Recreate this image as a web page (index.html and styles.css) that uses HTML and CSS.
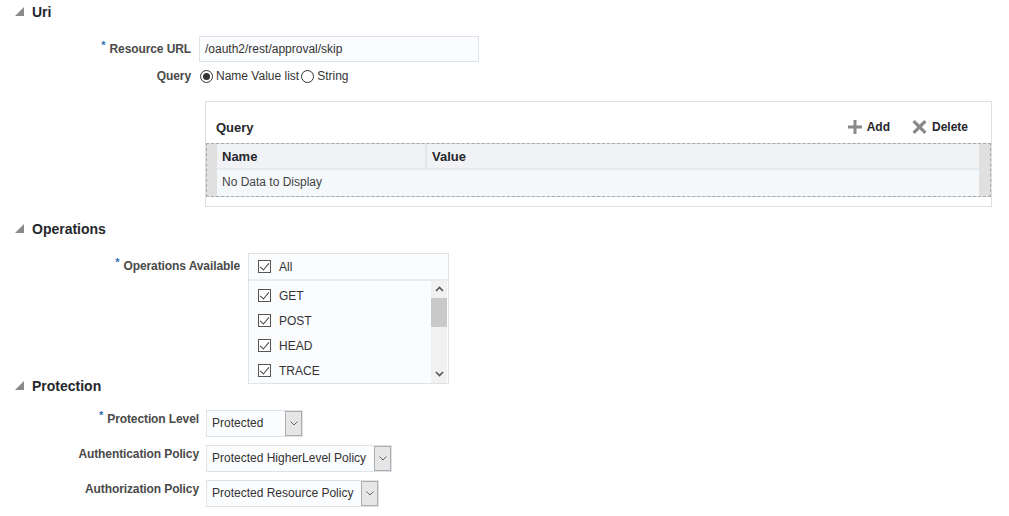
FILE: index.html
```html
<!DOCTYPE html>
<html>
<head>
<meta charset="utf-8">
<link rel="stylesheet" href="styles.css">
</head>
<body>
<div class="page">

  <div class="sec-head sec-uri"><span class="tri"></span>Uri</div>
  <div class="form form-uri">
    <label class="lbl"><span class="req">*</span>Resource URL</label>
    <div class="field"><div class="input">/oauth2/rest/approval/skip</div></div>
    <label class="lbl lbl-q">Query</label>
    <div class="field radios">
      <span class="radio on"></span><span class="rtext">Name Value list</span>
      <span class="radio"></span><span class="rtext">String</span>
    </div>
  </div>

  <div class="panel">
    <div class="panel-bar">
      <span class="panel-title">Query</span>
      <span class="tool">
        <svg width="14" height="14" viewBox="0 0 14 14"><path d="M5.5 0h3v5.5H14v3H8.5V14h-3V8.5H0v-3h5.5z" fill="#8a8a8a"/></svg>
        <span>Add</span>
      </span>
      <span class="tool tool-del">
        <svg width="15" height="14" viewBox="0 0 15 14"><path d="M0.5 2.2L2.7 0l4.8 4.6L12.3 0l2.2 2.2L9.8 7l4.7 4.8-2.2 2.2-4.8-4.7L2.7 14 0.5 11.8 5.2 7z" fill="#8a8a8a"/></svg>
        <span>Delete</span>
      </span>
    </div>
    <div class="table">
      <div class="strip"></div>
      <div class="tbody">
        <div class="thead">
          <div class="th th-name">Name</div>
          <div class="th">Value</div>
        </div>
        <div class="trow">No Data to Display</div>
      </div>
      <div class="strip strip-r"></div>
    </div>
  </div>

  <div class="sec-head sec-ops"><span class="tri"></span>Operations</div>
  <div class="form form-ops">
    <label class="lbl"><span class="req">*</span>Operations Available</label>
    <div class="listbox">
      <div class="lb-all"><span class="cb"></span>All</div>
      <div class="lb-body">
        <div class="lb-items">
          <div class="lb-item"><span class="cb"></span>GET</div>
          <div class="lb-item"><span class="cb"></span>POST</div>
          <div class="lb-item"><span class="cb"></span>HEAD</div>
          <div class="lb-item"><span class="cb"></span>TRACE</div>
        </div>
        <div class="sbar">
          <svg class="arr" width="9" height="6" viewBox="0 0 9 6"><path d="M1 5l3.5-3.5L8 5" fill="none" stroke="#555" stroke-width="1.6"/></svg>
          <div class="thumb"></div>
          <div class="track-fill"></div>
          <svg class="arr" width="9" height="6" viewBox="0 0 9 6"><path d="M1 1l3.5 3.5L8 1" fill="none" stroke="#555" stroke-width="1.6"/></svg>
        </div>
      </div>
    </div>
  </div>

  <div class="sec-head sec-prot"><span class="tri"></span>Protection</div>
  <div class="form form-prot">
    <label class="lbl"><span class="req">*</span>Protection Level</label>
    <div class="select select-min"><span class="sval">Protected</span><span class="sbtn"><svg width="8" height="5" viewBox="0 0 8 5"><path d="M0.5 0.5L4 4l3.5-3.5" fill="none" stroke="#666" stroke-width="1"/></svg></span></div>
    <label class="lbl">Authentication Policy</label>
    <div class="select"><span class="sval">Protected HigherLevel Policy</span><span class="sbtn"><svg width="8" height="5" viewBox="0 0 8 5"><path d="M0.5 0.5L4 4l3.5-3.5" fill="none" stroke="#666" stroke-width="1"/></svg></span></div>
    <label class="lbl">Authorization Policy</label>
    <div class="select"><span class="sval">Protected Resource Policy</span><span class="sbtn"><svg width="8" height="5" viewBox="0 0 8 5"><path d="M0.5 0.5L4 4l3.5-3.5" fill="none" stroke="#666" stroke-width="1"/></svg></span></div>
  </div>

</div>
</body>
</html>
```

FILE: styles.css
```css
* { box-sizing: border-box; }
html, body { margin: 0; padding: 0; background: #fff; }
body {
  font-family: "Liberation Sans", Arial, sans-serif;
  font-size: 12px;
  color: #333;
}
.page { width: 1009px; height: 516px; overflow: hidden; }

.sec-head {
  display: flex;
  align-items: center;
  height: 20px;
  padding-left: 15px;
  font-size: 14px;
  font-weight: bold;
  color: #26272c;
}
.tri {
  width: 0; height: 0;
  border-style: solid;
  border-width: 0 0 9px 9px;
  border-color: transparent transparent #8a8a8a transparent;
  margin-right: 8px;
  margin-top: -1px;
}
.sec-uri { margin-top: 2px; }
.sec-ops { margin-top: 12px; }
.sec-prot { margin-top: -8px; }

.form { display: grid; align-items: start; }
.lbl {
  text-align: right;
  font-weight: bold;
  color: #4a4a4a;
  white-space: nowrap;
  line-height: 14px;
  letter-spacing: -0.1px;
}
.req {
  color: #2b6fb6;
  font-weight: bold;
  font-size: 11px;
  line-height: 0;
  vertical-align: 4px;
  margin-right: 4px;
}

/* URI */
.form-uri {
  grid-template-columns: 191px 290px;
  column-gap: 8px;
  row-gap: 4px;
  margin-top: 14px;
}
.form-uri .lbl { padding-top: 6px; }
.input {
  width: 280px;
  height: 26px;
  border: 1px solid #dde3e8;
  background: #fbfcfd;
  padding-left: 5px;
  line-height: 24px;
  color: #333;
}
.form-uri .lbl-q { padding-top: 3px; }
.radios { display: flex; align-items: center; height: 20px; margin-left: 1px; }
.radio {
  width: 13px; height: 13px;
  border: 1px solid #333;
  border-radius: 50%;
  background: #fff;
  position: relative;
  margin-right: 3px;
}
.radio.on::after {
  content: "";
  position: absolute;
  left: 2px; top: 2px;
  width: 7px; height: 7px;
  border-radius: 50%;
  background: #333;
}
.rtext { margin-right: 2px; color: #333; }

/* panel */
.panel {
  margin: 15px 0 0 205px;
  width: 787px;
  height: 106px;
  border: 1px solid #dbe0e4;
  background: #fff;
  padding-top: 14px;
}
.panel-bar {
  display: flex;
  align-items: center;
  height: 22px;
  padding-left: 10px;
}
.panel-title { font-size: 13px; font-weight: bold; color: #26272c; flex: 1; }
.tool { display: flex; align-items: center; font-weight: bold; color: #26272c; }
.tool svg { margin-right: 5px; }
.tool-del { margin-left: 22px; margin-right: 23px; }
.table {
  display: flex;
  margin-top: 5px;
  height: 54px;
  border: 1px dashed #a9a9a9;
  background: #e0e0e0;
}
.strip { width: 10px; background: #e0e0e0; }
.strip-r { width: 11px; }
.tbody { flex: 1; display: flex; flex-direction: column; }
.thead {
  display: flex;
  height: 26px;
  background: #f0f2f5;
  border-bottom: 2px solid #e3eaf0;
  font-size: 13px;
  font-weight: bold;
  color: #26272c;
}
.th { padding-left: 5px; line-height: 25px; }
.th-name { width: 210px; border-right: 2px solid #e3e7ea; }
.trow {
  flex: 1;
  background: #f5f8fb;
  padding-left: 5px;
  line-height: 24px;
  color: #444;
}

/* operations */
.form-ops {
  grid-template-columns: 240px 201px;
  column-gap: 8px;
  margin-top: 14px;
}
.form-ops .lbl { padding-top: 6px; }
.listbox {
  width: 201px;
  height: 131px;
  border: 1px solid #dde3e8;
  background: #fbfcfe;
  display: flex;
  flex-direction: column;
}
.cb {
  width: 13px; height: 13px;
  border: 1px solid #555;
  background: #fff;
  margin-right: 8px;
  position: relative;
}
.cb::after {
  content: "";
  position: absolute;
  left: 3px; top: 0px;
  width: 4px; height: 8px;
  border-right: 1.3px solid #444;
  border-bottom: 1.3px solid #444;
  transform: rotate(40deg);
}
.lb-all {
  display: flex; align-items: center;
  height: 28px;
  padding-left: 9px;
  border-bottom: 2px solid #e8ecf0;
  color: #333;
}
.lb-body { flex: 1; display: flex; }
.lb-items { flex: 1; padding-top: 2px; }
.lb-item {
  display: flex; align-items: center;
  height: 25px;
  padding-left: 9px;
  color: #333;
}
.sbar {
  width: 16px;
  margin-right: 1px;
  background: #f1f1f1;
  display: flex;
  flex-direction: column;
  align-items: center;
}
.arr { margin-top: 5px; flex: none; }
.sbar .thumb { width: 16px; height: 29px; background: #c9c9c9; margin-top: 6px; flex: none; }
.track-fill { flex: 1; }
.sbar .arr:last-child { margin: 0 0 6px; }

/* protection */
.form-prot {
  grid-template-columns: 199px auto;
  column-gap: 7px;
  row-gap: 8px;
  margin-top: 14px;
  justify-content: start;
}
.form-prot .lbl { padding-top: 2px; }
.select {
  display: flex;
  height: 27px;
  border: 1px solid #dde3e8;
  background: #fbfcfd;
  width: max-content;
}
.select-min { width: 97px; }
.select-min .sval { flex: 1; }
.sval { padding: 0 8px 0 5px; line-height: 25px; color: #333; }
.sbtn {
  width: 17px;
  background: #e6e6e6;
  border: 1px solid #adadad;
  display: flex; align-items: center; justify-content: center;
}
```
